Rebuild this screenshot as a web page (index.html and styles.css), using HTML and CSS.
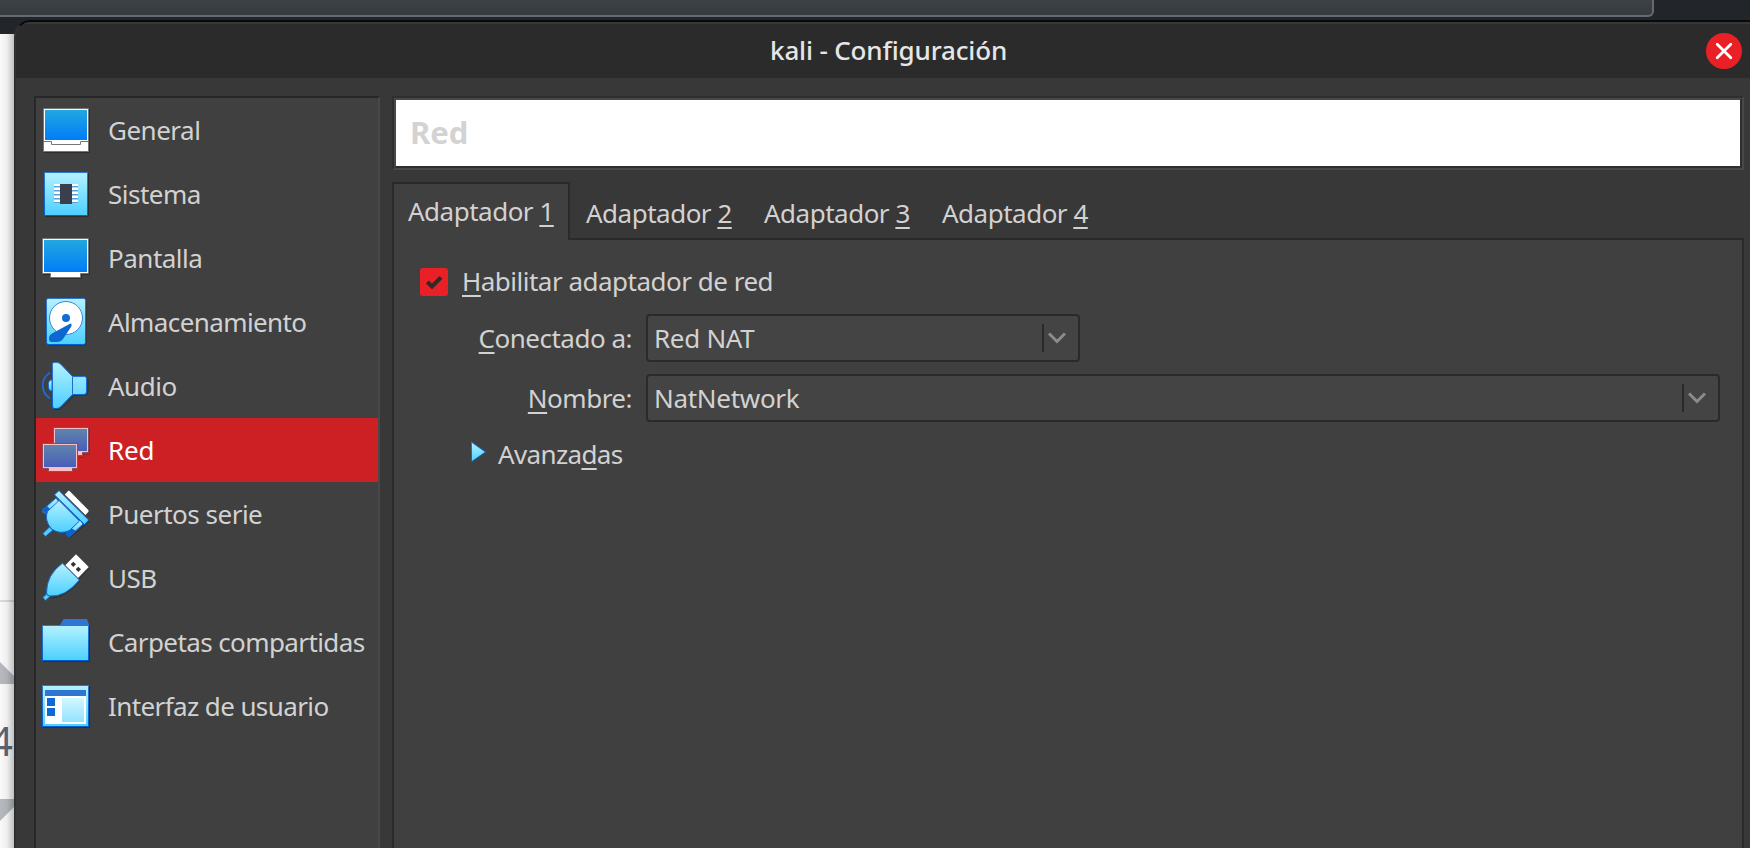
FILE: index.html
```html
<!DOCTYPE html>
<html lang="es">
<head>
<meta charset="utf-8">
<title>kali - Configuración</title>
<link rel="stylesheet" href="styles.css">
</head>
<body>
<div class="backdrop">
  <div class="addressbar"></div>
  <svg class="page-edge" width="16" height="814" viewBox="0 34 16 814">
    <path d="M0 601H16" stroke="#dcdde1" stroke-width="2"/>
    <path d="M0 662L16 678V684H0ZM0 799H16V805L0 821Z" fill="#b8bcc1"/>
  </svg>
  <span class="page-number">4</span>
  <div class="page-shade"></div>
</div>

<main class="window">
  <header class="titlebar">
    <h1 class="title">kali - Configuración</h1>
    <button class="close" aria-label="Cerrar">
      <svg width="36" height="36" viewBox="0 0 36 36"><path d="M11.2 11.2L24.8 24.8M24.8 11.2L11.2 24.8" stroke="#fff" stroke-width="2.8" stroke-linecap="round"/></svg>
    </button>
  </header>

  <div class="content">
    <svg width="0" height="0" class="defs">
      <defs>
        <linearGradient id="blue" x1="0" y1="0" x2="0" y2="1"><stop offset="0" stop-color="#22a7e0"/><stop offset="1" stop-color="#007df8"/></linearGradient>
        <linearGradient id="cyan" x1="0" y1="0" x2="0" y2="1"><stop offset="0" stop-color="#b4f2ff"/><stop offset="1" stop-color="#4ccfff"/></linearGradient>
        <linearGradient id="edge" x1="0" y1="0" x2="0" y2="1"><stop offset="0" stop-color="#2f76d2"/><stop offset="1" stop-color="#0061d2"/></linearGradient>
        <linearGradient id="muted" x1="0" y1="0" x2="0" y2="1"><stop offset="0" stop-color="#5f84ab"/><stop offset="1" stop-color="#4a5dbb"/></linearGradient>
      </defs>
    </svg>
    <nav class="sidebar">
      <a class="item">
        <svg class="icon" viewBox="0 0 48 48"><path d="M2 46.500H47.500V3" fill="none" stroke="#2c2c2c"/><rect x="1.500" y="2.500" width="45" height="43" fill="#fff" stroke="#777"/><rect x="3" y="4" width="43" height="30" fill="url(#blue)"/><path d="M45 3H46V35H45Z" fill="#fff"/><path d="M2 35.500H9.500V38.500H38.500V35.500H46" fill="none" stroke="#777"/></svg>
        <span>General</span></a>
      <a class="item">
        <svg class="icon" viewBox="0 0 48 48"><path d="M3 46.500H46.500V3" fill="none" stroke="#2c2c2c"/><rect x="2.500" y="2.500" width="43" height="43" fill="url(#cyan)" stroke="url(#edge)"/><path d="M12 15H36M12 19H36M12 23H36M12 27H36M12 31H36" stroke="#fff" stroke-width="2"/><path d="M12 16.500H36M12 20.500H36M12 24.500H36M12 28.500H36M12 32.500H36" stroke="#5a9fd6"/><rect x="18" y="14" width="12" height="20" fill="#39404c"/></svg>
        <span>Sistema</span></a>
      <a class="item">
        <svg class="icon" viewBox="0 0 48 48"><path d="M1 40.500H9V44.500H39.500V40.500H47.500V5" fill="none" stroke="#2c2c2c"/><path d="M.5 4.500H46.500V39.500H38.500V43.500H8.500V39.500H.5Z" fill="#fff" stroke="#777"/><rect x="2" y="6" width="43" height="32" fill="url(#blue)"/></svg>
        <span>Pantalla</span></a>
      <a class="item wide">
        <svg class="icon" viewBox="0 0 48 48"><rect x="5.500" y="1.500" width="39" height="46" rx="2" fill="#2c2c2c"/><rect x="4.500" y=".5" width="39" height="46" rx="2" fill="url(#cyan)" stroke="url(#edge)"/><circle cx="24" cy="20" r="16.500" fill="#fff" stroke="#3b82d8"/><circle cx="24" cy="20" r="4" fill="#136bd6"/><path d="M28.500 25.500Q30.500 26 29 29L21 41Q19 44 15 44H10Q7 44 7 40.500Q7 37 10 35.500Z" fill="#0d67d3"/></svg>
        <span>Almacenamiento</span></a>
      <a class="item">
        <svg class="icon" viewBox="0 0 48 48"><path d="M12 47.500H18L32 34L33 33H44L46 31V17" fill="none" stroke="#2c2c2c"/><path d="M10 18Q6 18 6.500 23.500Q6 29 10 29Z" fill="url(#cyan)" stroke="url(#edge)"/><path d="M8 10.500Q.5 15.500 .8 23.500Q.5 31.500 8 36.500" fill="none" stroke="#1e6cd0" stroke-width="1.700"/><path d="M10.500 2Q10.500 .5 12.500 .5H15Q17 .5 19 2.500L30.500 14.500H42.500Q44.500 14.500 44.500 17V29.500Q44.500 32.500 42 32.500H30.500L19 44.500Q17 46.500 15 46.500H12.500Q10.500 46.500 10.500 44Z" fill="url(#cyan)" stroke="url(#edge)"/><path d="M30.500 15V32" stroke="#1b6cd3"/></svg>
        <span>Audio</span></a>
      <a class="item selected">
        <svg class="icon" viewBox="0 0 48 48"><path d="M47.500 2V28.500H41.500V31.500H36" fill="none" stroke="#9a2026"/><path d="M11.500 1.500H46.500V26.500H40.500V29.500H17.500V26.500H11.500Z" fill="#f7c0c3" stroke="#8f4a52"/><rect x="13" y="3" width="32" height="22" fill="url(#muted)"/><path d="M.5 17.500H35.500V42.500H30.500V45.500H6.500V42.500H.5Z" fill="#f7c0c3" stroke="#8f4a52"/><rect x="2" y="19" width="32" height="22" fill="url(#muted)"/></svg>
        <span>Red</span></a>
      <a class="item">
        <svg class="icon" viewBox="0 0 48 48"><path d="M18 2L47.500 31L43 35.500L28 47.500" fill="none" stroke="#2c2c2c"/><path d="M22.800 4.500L26.300 .8Q27 .5 27.800 1.200L46.300 20Q46.900 21 46.200 22L43.500 25Z" fill="#fff"/><path d="M14 8L.5 20V22L4 24L17 12Z" fill="url(#cyan)" stroke="#1e6cd0"/><path d="M5 16L0 20.500L4 24L9 20Z" fill="#0e62cc"/><path d="M38 30L24 43L27 47L41 34Z" fill="url(#cyan)" stroke="#1e6cd0"/><path d="M29 38L24 43V45L27.500 47.500L34 41Z" fill="#0e62cc"/><path d="M7.500 37L.8 43.500L3.500 46.500L11 40Z" fill="#55cdfb" stroke="#0e62cc"/><path d="M17 10.500L37.500 31L27.500 40.500Q18 45 9.500 39Q2 30 5.500 21.500Z" fill="url(#cyan)" stroke="url(#edge)"/><path d="M17 .7L46.700 30L42.500 34.500L12.500 4.800Z" fill="url(#cyan)" stroke="url(#edge)"/></svg>
        <span>Puertos serie</span></a>
      <a class="item">
        <svg class="icon" viewBox="0 0 48 48"><path d="M47.500 14L37 25M38 27Q22 45 8 44" fill="none" stroke="#2c2c2c"/><path d="M34 .3L46.700 13L36 24L23.300 11.300Z" fill="#fff"/><path d="M31.300 7.700L34 10.300L31.300 13L28.700 10.300ZM36.300 12.700L39 15.300L36.300 18L33.700 15.300Z" fill="#333"/><path d="M5.500 39L.8 43.500L3.500 46.500L8.500 42Z" fill="#55cdfb" stroke="#0e62cc"/><path d="M20.500 9.300L37.300 26Q23 43.500 8 42Q4.500 42 4.500 38.500Q4.500 21 20.500 9.300Z" fill="url(#cyan)" stroke="url(#edge)"/></svg>
        <span>USB</span></a>
      <a class="item wide">
        <svg class="icon" viewBox="0 0 48 48"><path d="M1 43.500H47.500V8" fill="none" stroke="#2c2c2c"/><path d="M17.500 8L21.500 1H45L47 7V9Z" fill="#2f76d2"/><rect x=".5" y="7.500" width="46" height="35" fill="url(#cyan)" stroke="url(#edge)"/></svg>
        <span>Carpetas compartidas</span></a>
      <a class="item wide">
        <svg class="icon" viewBox="0 0 48 48"><path d="M1 45.500H47.500V4" fill="none" stroke="#2c2c2c"/><rect x=".5" y="3.500" width="46" height="41" fill="url(#cyan)" stroke="url(#edge)"/><path d="M3 8H44V14H3Z" fill="#2f76d2"/><path d="M3 14H44V42H3Z" fill="#fff"/><path d="M5 16H13V24H5ZM5 26H13V34H5Z" fill="#0f69d5"/><path d="M20 16H42V40H20Z" fill="url(#cyan)" opacity=".6"/></svg>
        <span>Interfaz de usuario</span></a>
    </nav>

    <section class="main">
      <div class="heading"><h2 class="heading-box">Red</h2></div>
      <div class="tabs">
        <a class="tab active">Adaptador <u>1</u></a>
        <a class="tab">Adaptador <u>2</u></a>
        <a class="tab">Adaptador <u>3</u></a>
        <a class="tab">Adaptador <u>4</u></a>
        <span class="tab-rest"></span>
      </div>
      <div class="panel">
        <label class="check-row">
          <span class="checkbox"><svg width="28" height="28" viewBox="0 0 28 28"><path d="M7.300 14L12 18.500L21 9.300" fill="none" stroke="#2b2b2b" stroke-width="4"/></svg></span>
          <span class="check-text"><u>H</u>abilitar adaptador de red</span>
        </label>
        <div class="field"><label class="label"><u>C</u>onectado a:</label>
          <div class="combo short"><span>Red NAT</span><span class="arrow"><svg width="18" height="12" viewBox="0 0 18 12"><path d="M1 1.500L9 9.500L17 1.500" fill="none" stroke="#8c8c8c" stroke-width="3"/></svg></span></div></div>
        <div class="field"><label class="label"><u>N</u>ombre:</label>
          <div class="combo"><span>NatNetwork</span><span class="arrow"><svg width="18" height="12" viewBox="0 0 18 12"><path d="M1 1.500L9 9.500L17 1.500" fill="none" stroke="#8c8c8c" stroke-width="3"/></svg></span></div></div>
        <div class="advanced">
          <svg width="16" height="22" viewBox="0 0 16 22"><path d="M1.500 1.200V20.800L15.400 11Z" fill="url(#cyan)" stroke="url(#edge)"/></svg>
          <span>Avanza<u>d</u>as</span>
        </div>
      </div>
    </section>
  </div>
</main>
</body>
</html>
```
FILE: styles.css
```css
* { box-sizing: border-box; }
body {
  margin: 0;
  width: 1750px;
  height: 848px;
  overflow: hidden;
  position: relative;
  background: #22262a;
  color: #d2d2d2;
  font-family: "Noto Sans", "Open Sans", sans-serif;
  font-size: 26px;
  line-height: 36px;
  letter-spacing: -0.5px;
  white-space: nowrap;
}
h1, h2 { margin: 0; }
u { text-decoration: underline 2px; text-underline-offset: 4px; text-decoration-skip-ink: none; }

/* What shows behind the window */
.backdrop { position: absolute; inset: 0; background: #22262a; }
.addressbar {
  width: 1654px;
  height: 17px;
  border: 2px solid #646a72;
  border-width: 0 2px 2px 0;
  border-radius: 0 0 6px 0;
  background: linear-gradient(#3c4245, #363b40);
}
.page-edge { position: absolute; left: 0; top: 34px; background: #fdfdfd; }
.page-number {
  position: absolute;
  right: 1737px;
  top: 715px;
  font-size: 40px;
  line-height: 52px;
  letter-spacing: 0;
  color: #5e6672;
}
.page-shade {
  position: absolute;
  left: 0;
  top: 34px;
  width: 14px;
  height: 814px;
  background: linear-gradient(90deg, rgba(0, 0, 0, 0.01), rgba(0, 0, 0, 0.06) 50%, rgba(0, 0, 0, 0.24));
}

.window {
  position: absolute;
  left: 14px;
  top: 20px;
  width: 1736px;
  height: 828px;
  border-top: 2px solid #08090a;
  border-left: 2px solid #303030;
  border-radius: 17px 0 0 0;
  background: #383838;
  overflow: hidden;
  display: flex;
  flex-direction: column;
}
.titlebar {
  height: 56px;
  flex: none;
  border-top: 2px solid #373737;
  background: #2b2b2b;
  display: grid;
  grid-template-columns: 1fr auto;
  align-items: center;
  padding: 0 8px 0 754px;
}
.title {
  font-size: 26px;
  font-weight: 500;
  letter-spacing: -0.15px;
  color: #e6e6e6;
  padding-bottom: 2px;
}
.close {
  width: 36px;
  height: 36px;
  padding: 0;
  border: 0;
  border-radius: 50%;
  background: #e92026;
}
.close svg { display: block; }

.content { flex: 1; display: flex; gap: 12px; padding: 18px 6px 0 18px; }
.defs { position: absolute; }

.sidebar {
  width: 346px;
  flex: none;
  background: #404040;
  border: 2px solid #272727;
  border-right-color: #484848;
  border-bottom: 0;
}
.item { height: 64px; display: flex; align-items: center; gap: 18px; padding-left: 6px; }
.item.wide { letter-spacing: -0.6px; }
.icon { width: 48px; height: 48px; flex: none; }
.selected { background: #cd2025; color: #fff; letter-spacing: -0.2px; }

.main { flex: 1; display: flex; flex-direction: column; }
.heading {
  height: 74px;
  flex: none;
  border: 2px solid #2f2f2f;
  border-right-color: #484848;
  border-bottom-color: #484848;
}
.heading-box {
  height: 70px;
  border: 2px solid #484848;
  border-right-color: #2f2f2f;
  border-bottom-color: #2f2f2f;
  background: #fff;
  color: #d3d3d3;
  padding-left: 14px;
  font-size: 31px;
  font-weight: 700;
  line-height: 64px;
  letter-spacing: 0;
}
.tabs { display: flex; height: 58px; margin-top: 12px; flex: none; }
.tab {
  width: 178px;
  padding: 13px 0 0 16px;
  border-bottom: 2px solid #2a2a2a;
}
.tab.active {
  padding: 9px 0 0 14px;
  border: 2px solid #2a2a2a;
  border-bottom: 0;
  background: #404040;
}
.tab-rest { flex: 1; border-bottom: 2px solid #2a2a2a; }
.panel {
  flex: 1;
  background: #404040;
  border: 2px solid #2a2a2a;
  border-width: 0 2px;
  padding: 24px 22px 0 26px;
}
.check-row { display: flex; align-items: center; gap: 14px; height: 36px; }
.check-text { padding-bottom: 2px; }
.checkbox { width: 28px; height: 28px; border-radius: 3px; background: #e92026; }
.checkbox svg { display: block; }
.field { display: flex; gap: 14px; height: 48px; margin-bottom: 12px; }
.check-row + .field { margin-top: 14px; }
.label { width: 212px; line-height: 48px; text-align: right; }
.combo {
  flex: 1;
  height: 48px;
  border: 2px solid #2a2a2a;
  border-radius: 4px;
  background: #444;
  display: flex;
  align-items: center;
  justify-content: space-between;
  padding: 0 12px 0 6px;
  letter-spacing: -0.3px;
}
.combo.short { flex: none; width: 434px; }
.arrow {
  height: 28px;
  border-left: 2px solid #2a2a2a;
  padding: 8px 0 0 4px;
}
.arrow svg { display: block; }
.advanced { display: flex; align-items: center; gap: 12px; margin: 14px 0 0 50px; letter-spacing: -0.65px; }
.advanced svg { margin-top: -5px; }
```
